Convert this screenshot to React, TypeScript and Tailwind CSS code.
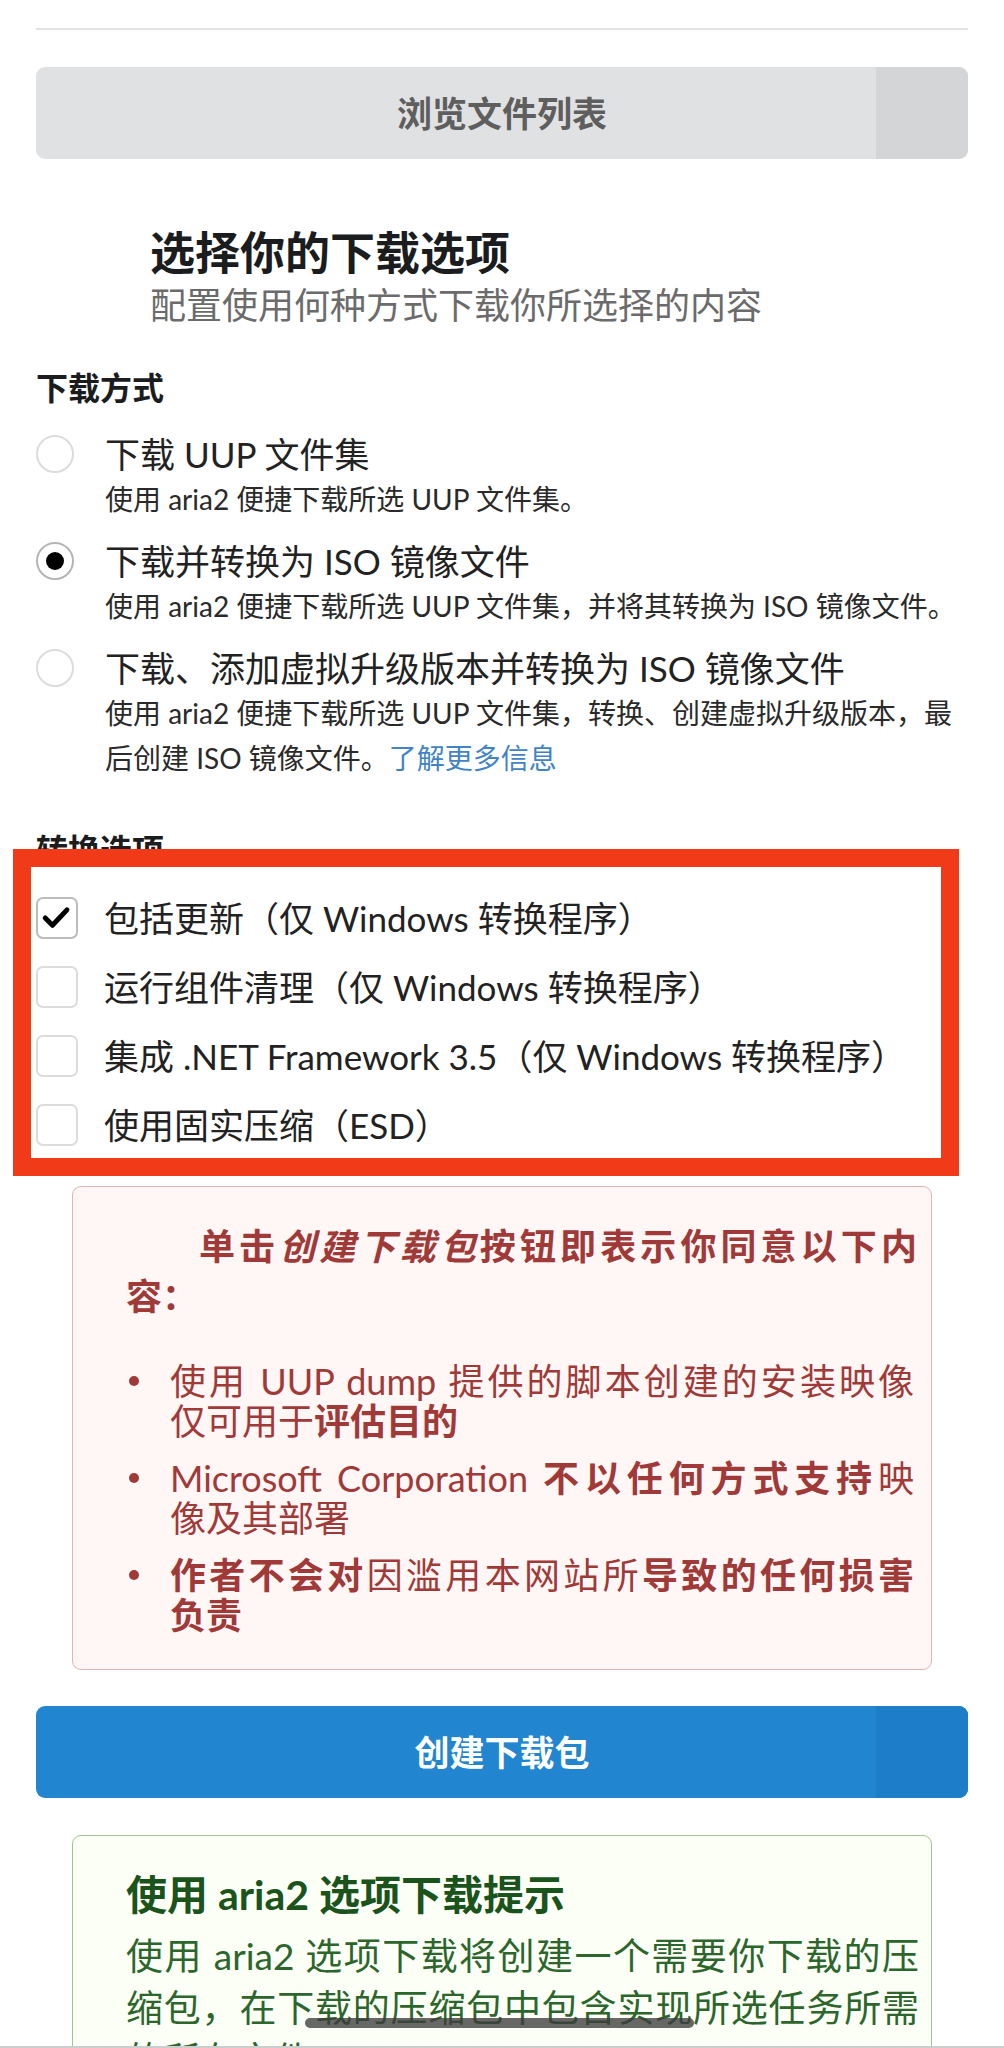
import React from "react";

type RadioItem = {
  label: string;
  desc: React.ReactNode;
  checked?: boolean;
};

const radios: RadioItem[] = [
  {
    label: "下载 UUP 文件集",
    desc: "使用 aria2 便捷下载所选 UUP 文件集。",
  },
  {
    label: "下载并转换为 ISO 镜像文件",
    desc: "使用 aria2 便捷下载所选 UUP 文件集，并将其转换为 ISO 镜像文件。",
    checked: true,
  },
  {
    label: "下载、添加虚拟升级版本并转换为 ISO 镜像文件",
    desc: (
      <>
        使用 aria2 便捷下载所选 UUP 文件集，转换、创建虚拟升级版本，最后创建 ISO 镜像文件。
        <a className="text-[#4183c4]">了解更多信息</a>
      </>
    ),
  },
];

const options = [
  { label: "包括更新（仅 Windows 转换程序）", checked: true },
  { label: "运行组件清理（仅 Windows 转换程序）" },
  { label: "集成 .NET Framework 3.5（仅 Windows 转换程序）" },
  { label: "使用固实压缩（ESD）" },
];

function Radio({ item }: { item: RadioItem }) {
  return (
    <div className="flex">
      <span
        className={`mt-[4px] flex h-[38px] w-[38px] shrink-0 items-center justify-center rounded-full border-2 bg-white ${
          item.checked ? "border-[#b5b5b5]" : "border-[#dcdcdd]"
        }`}
      >
        {item.checked && <span className="h-[18px] w-[18px] rounded-full bg-black" />}
      </span>
      <div className="ml-[31px]">
        <div className="text-[35px] leading-[46px] text-[#222]">{item.label}</div>
        <div className="text-[28px] leading-[45px] text-[#2a2a2a]">{item.desc}</div>
      </div>
    </div>
  );
}

function Checkbox({ label, checked }: { label: string; checked?: boolean }) {
  return (
    <div className="flex h-[69px] items-center">
      <span
        className={`flex h-[42px] w-[42px] shrink-0 items-center justify-center rounded-[7px] border-2 bg-white ${
          checked ? "border-[#bcbcbc]" : "border-[#dcdcdd]"
        }`}
      >
        {checked && (
          <svg width="42" height="42" viewBox="0 0 42 42">
            <polyline
              points="8,21 16,29 32,12"
              fill="none"
              stroke="#000"
              strokeWidth="5.5"
              strokeLinecap="round"
              strokeLinejoin="round"
            />
          </svg>
        )}
      </span>
      <span className="ml-[26px] text-[35px] leading-[46px] text-[#222]">{label}</span>
    </div>
  );
}

// a bullet row whose first line is stretched to the full width, like the justified original
function Bullet({ first, rest }: { first: React.ReactNode; rest: React.ReactNode }) {
  return (
    <li className="flex">
      <span className="w-[44px] shrink-0 pl-[3px] pt-[15px]">
        <span className="block h-[10px] w-[10px] rounded-full bg-[#9f3a38]" />
      </span>
      <span className="flex-1">
        <span className="block text-justify [text-align-last:justify]">{first}</span>
        <span className="block">{rest}</span>
      </span>
    </li>
  );
}

export default function App() {
  return (
    <div className="relative h-[2048px] w-[1004px] overflow-hidden bg-white font-[Lato,'Noto_Sans_CJK_SC',sans-serif] text-[#222]">
      <div className="px-[36px] pt-[28px]">
        <div className="h-[2px] bg-[#e4e4e4]" />

        <button className="relative mt-[37px] flex h-[92px] w-full items-center justify-center overflow-hidden rounded-[9px] bg-[#e0e1e2] text-[35px] font-bold text-[#5e5e5e]">
          <span className="absolute inset-y-0 right-0 w-[92px] bg-[#d4d5d6]" />
          <span className="relative">浏览文件列表</span>
        </button>

        <div className="mt-[68px] pl-[114px]">
          <h2 className="text-[45px] font-bold leading-[52px] text-[#1b1c1d]">选择你的下载选项</h2>
          <p className="text-[36px] leading-[52px] text-[#6b6b6b]">配置使用何种方式下载你所选择的内容</p>
        </div>

        <div className="mt-[34px] text-[32px] font-bold leading-[46px] text-[#1b1c1d]">下载方式</div>
        <div className="mt-[20px] flex flex-col gap-[16px]">
          {radios.map((r) => (
            <Radio key={r.label} item={r} />
          ))}
        </div>

        <div className="mt-[46px] text-[32px] font-bold leading-[46px] text-[#1b1c1d]">转换选项</div>
        <div className="mt-[10px] flex flex-col">
          {options.map((o) => (
            <Checkbox key={o.label} label={o.label} checked={o.checked} />
          ))}
        </div>

        <div className="mx-[36px] mt-[27px] rounded-[9px] border border-[#e0b4b4] bg-[#fff6f6] pb-[34px] pl-[53px] pr-[14px] pt-[34px] text-[#9f3a38]">
          <p className="text-[36px] font-bold leading-[50px]">
            <span className="block pl-[73px] text-justify [text-align-last:justify]">
              单击<i>创建下载包</i>按钮即表示你同意以下内
            </span>
            <span className="block">容：</span>
          </p>
          <ul className="mt-[40px] flex flex-col gap-[17px] pr-[3px] text-[36px] leading-[40px]">
            <Bullet
              first="使用 UUP dump 提供的脚本创建的安装映像"
              rest={
                <>
                  仅可用于<b>评估目的</b>
                </>
              }
            />
            <Bullet
              first={
                <>
                  Microsoft Corporation <b>不以任何方式支持</b>映
                </>
              }
              rest="像及其部署"
            />
            <Bullet
              first={
                <>
                  <b>作者不会对</b>因滥用本网站所<b>导致的任何损害</b>
                </>
              }
              rest={<b>负责</b>}
            />
          </ul>
        </div>

        <button className="relative mt-[36px] flex h-[92px] w-full items-center justify-center overflow-hidden rounded-[9px] bg-[#2185d0] text-[35px] font-bold text-white">
          <span className="absolute inset-y-0 right-0 w-[92px] bg-[#1d7dc8]" />
          <span className="relative">创建下载包</span>
        </button>

        <div className="mx-[36px] mt-[37px] rounded-[9px] border border-[#a3c293] bg-[#fcfff5] pb-[34px] pl-[53px] pr-[12px] pt-[33px]">
          <div className="text-[41px] font-bold leading-[52px] text-[#1a531b]">使用 aria2 选项下载提示</div>
          <p className="mt-[9px] text-justify text-[37px] leading-[52px] text-[#2c662d]">
            使用 aria2 选项下载将创建一个需要你下载的压缩包，在下载的压缩包中包含实现所选任务所需的所有文件。
          </p>
        </div>
      </div>

      {/* annotation frame */}
      <div className="pointer-events-none absolute left-[13px] top-[849px] h-[327px] w-[946px] border-[18px] border-[#f03a18]" />

      {/* home indicator */}
      <div className="absolute left-[305px] top-[2018px] h-[10px] w-[389px] rounded-full bg-[rgba(60,60,60,0.78)]" />
      <div className="absolute bottom-0 left-0 h-[2px] w-full bg-[#cdcdcd]" />
    </div>
  );
}
